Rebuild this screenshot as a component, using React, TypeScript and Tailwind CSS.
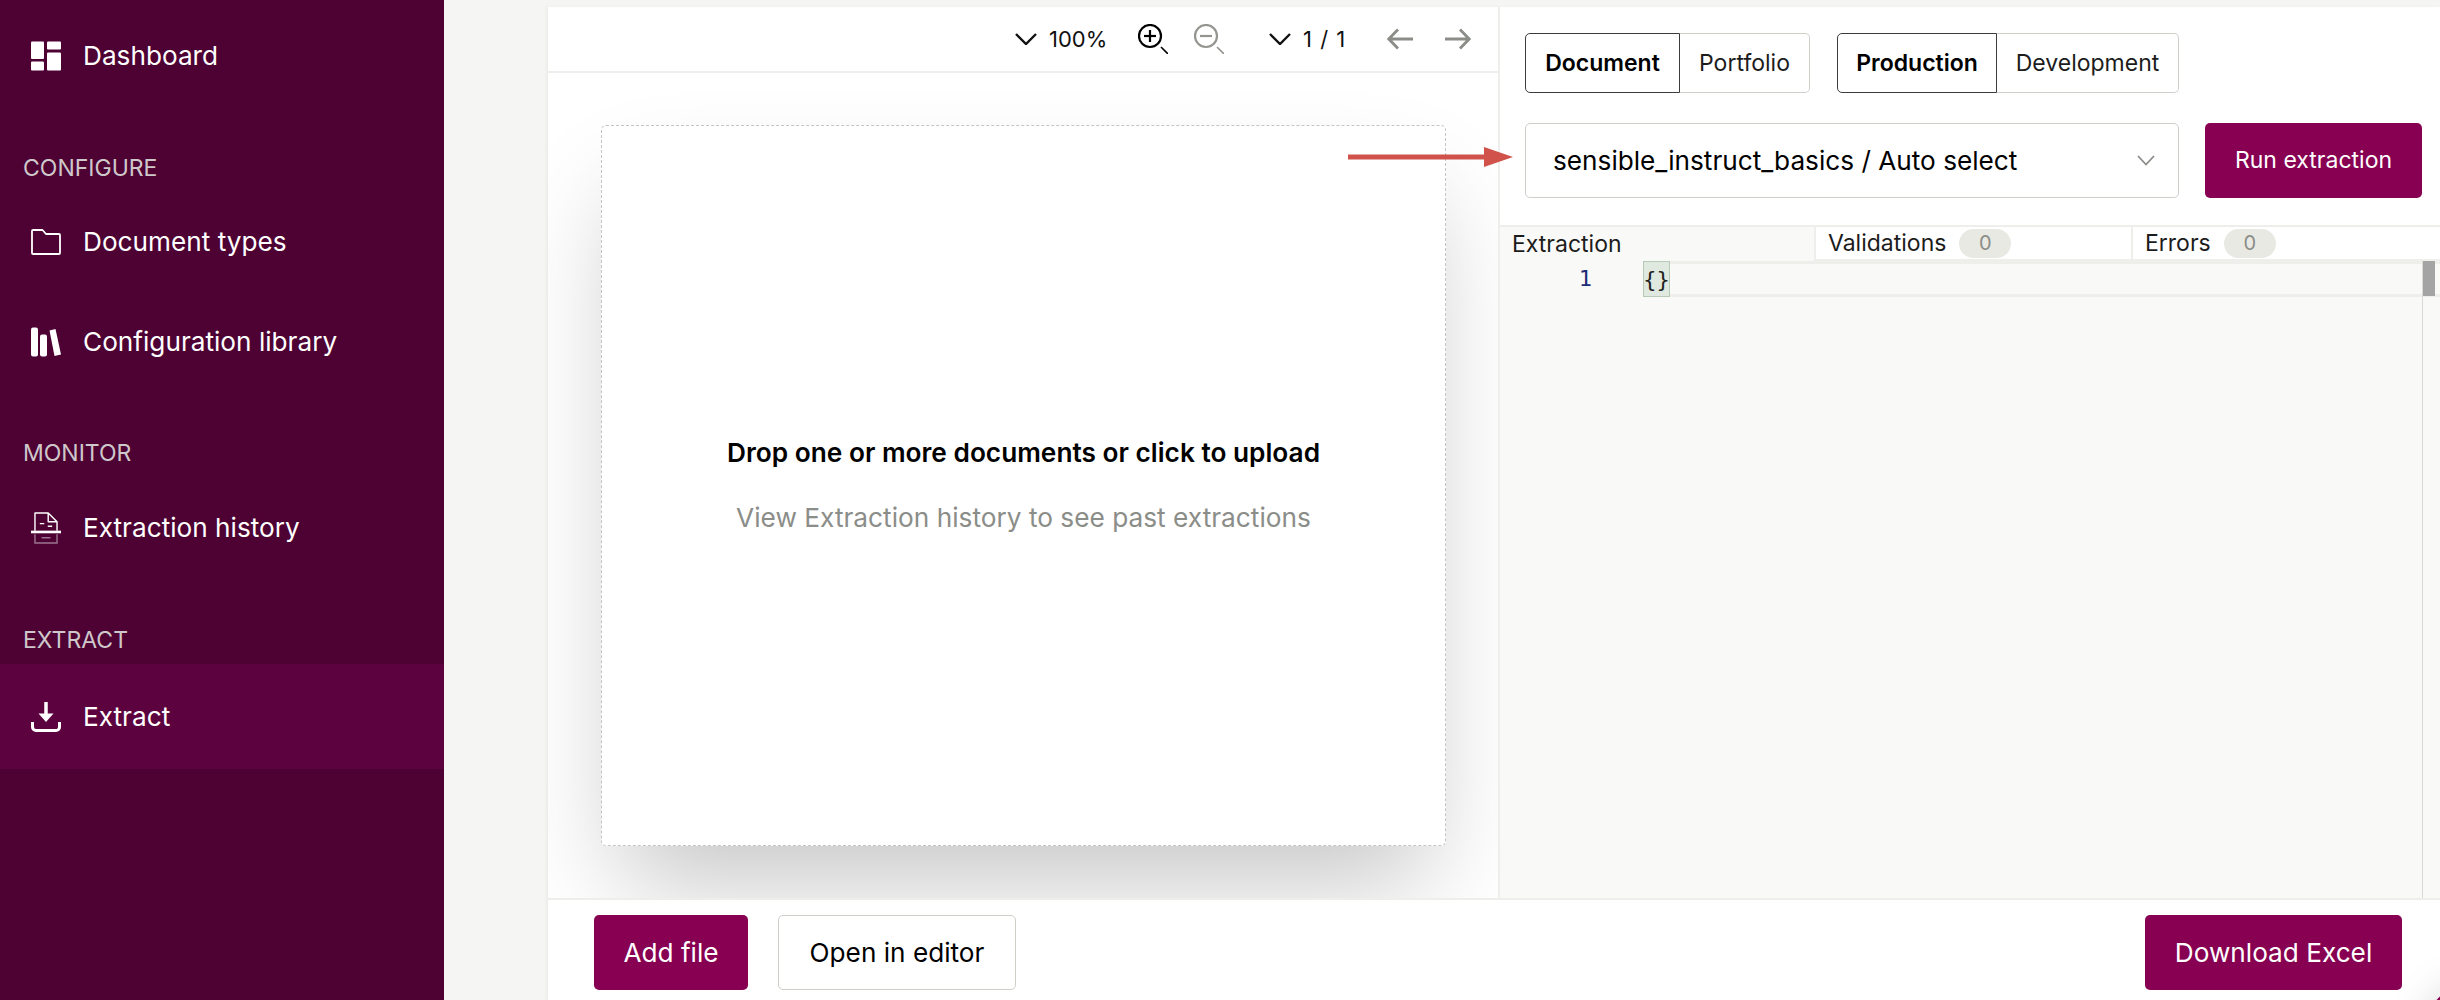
import React from "react";

const font = { fontFamily: "Inter, sans-serif" };

const DashboardIcon = () => (
  <svg width="30" height="30" viewBox="0 0 30 30" fill="currentColor">
    <rect x="0" y="0.5" width="13" height="17.5" rx="1" />
    <rect x="0" y="20.5" width="13" height="9" rx="1" />
    <rect x="16" y="0.5" width="14" height="8" rx="1" />
    <rect x="16" y="11.5" width="14" height="18" rx="1" />
  </svg>
);

const FolderIcon = () => (
  <svg width="30" height="30" viewBox="0 0 30 30" fill="none" stroke="currentColor" strokeWidth="1.8">
    <path d="M1 4a1 1 0 0 1 1-1h9.5l3.5 4h13a1 1 0 0 1 1 1v18a1 1 0 0 1-1 1H2a1 1 0 0 1-1-1z" strokeLinejoin="round" />
  </svg>
);

const LibraryIcon = () => (
  <svg width="30" height="30" viewBox="0 0 30 30" fill="currentColor">
    <rect x="0" y="0.5" width="7" height="29" rx="2" />
    <rect x="9" y="7.5" width="7" height="22" rx="2" />
    <path d="M18.5 3.5l6-1.5 5.5 25.5-6.5 1.5z" />
  </svg>
);

const HistoryIcon = () => (
  <svg width="34" height="36" viewBox="0 0 34 36" fill="none" stroke="currentColor" strokeWidth="1.6">
    <path d="M4.5 21V1h15l10 10v10M19.5 1v10h10" strokeLinejoin="round" />
    <path d="M10 13h5M19 16h5" />
    <path d="M0 22.5h34" strokeWidth="3" />
    <path d="M4.5 25v10h25V25M12 29h10" opacity="0.45" />
  </svg>
);

const ExtractIcon = () => (
  <svg width="30" height="30" viewBox="0 0 30 30" fill="none" stroke="currentColor">
    <path d="M15 0v14" strokeWidth="3.5" />
    <path d="M7.5 11.5h15L15 20z" fill="currentColor" stroke="none" />
    <path d="M1.5 20v5a3.5 3.5 0 0 0 3.5 3.5h20a3.5 3.5 0 0 0 3.5-3.5v-5" strokeWidth="3" />
  </svg>
);

const Chevron = ({ className = "" }: { className?: string }) => (
  <svg width="22" height="12" viewBox="0 0 22 12" fill="none" stroke="currentColor" strokeWidth="2.4" className={className}>
    <path d="M1 1l10 10L21 1" />
  </svg>
);

const Magnifier = ({ plus, className = "" }: { plus?: boolean; className?: string }) => (
  <svg width="30" height="30" viewBox="0 0 30 30" fill="none" stroke="currentColor" className={className}>
    <circle cx="12" cy="12" r="11" strokeWidth="2.2" />
    <path d="M6 12h12" strokeWidth="2.2" />
    {plus && <path d="M12 6v12" strokeWidth="2.2" />}
    <path d="M23 23l7 7" strokeWidth="1.6" />
  </svg>
);

const Arrow = ({ flip }: { flip?: boolean }) => (
  <svg width="27" height="22" viewBox="0 0 27 22" fill="none" stroke="currentColor" strokeWidth="2.8" className={flip ? "rotate-180 text-[#8b8d88]" : "text-[#8b8d88]"}>
    <path d="M26 11H2M11 1.5L1.8 11l9.2 9.5" />
  </svg>
);

const NavItem = ({ icon, label, active }: { icon: React.ReactNode; label: string; active?: boolean }) => (
  <div className={`flex items-center pl-[31px] text-[26.2px] text-white ${active ? "h-[105px] bg-[#5c023e]" : "h-[100px]"}`}>
    <div className="flex w-[30px] shrink-0 items-center justify-center">{icon}</div>
    <span className="ml-[22px]">{label}</span>
  </div>
);

const SectionLabel = ({ label, className }: { label: string; className: string }) => (
  <div className={`h-6 pl-[23px] text-[23px] leading-6 text-[#cfc8cb] ${className}`}>{label}</div>
);

const Segment = ({ first, second, firstWidth, secondWidth }: { first: string; second: string; firstWidth: string; secondWidth: string }) => (
  <div className="flex h-[60px] text-[23px]">
    <div className={`flex items-center justify-center rounded-l-[5px] border border-[#3c3c3a] font-semibold text-black ${firstWidth}`}>{first}</div>
    <div className={`flex items-center justify-center rounded-r-[5px] border border-l-0 border-[#cfcfca] text-[#1c1c1c] ${secondWidth}`}>{second}</div>
  </div>
);

const Badge = () => (
  <span className="ml-[13px] flex h-[29px] w-[52px] items-center justify-center rounded-full bg-[#e9e9e4] text-[20px] text-[#8b8d88]">0</span>
);

export default function App() {
  return (
    <div className="relative flex h-[1000px] w-[2440px] overflow-hidden bg-[#f5f5f3]" style={font}>
      {/* sidebar */}
      <aside className="flex w-[444px] shrink-0 flex-col bg-[#4d0233] pt-[6px]">
        <NavItem icon={<DashboardIcon />} label="Dashboard" />
        <SectionLabel label="CONFIGURE" className="mt-[50px] mb-[12px]" />
        <NavItem icon={<FolderIcon />} label="Document types" />
        <NavItem icon={<LibraryIcon />} label="Configuration library" />
        <SectionLabel label="MONITOR" className="mt-[49px] mb-[13px]" />
        <NavItem icon={<HistoryIcon />} label="Extraction history" />
        <SectionLabel label="EXTRACT" className="mt-[50px] mb-[12px]" />
        <NavItem icon={<ExtractIcon />} label="Extract" active />
      </aside>

      {/* main panel */}
      <main className="ml-[104px] mt-[7px] flex min-w-0 flex-1 flex-col bg-white shadow-[-2px_0_3px_rgba(0,0,0,0.04)]">
        <div className="flex h-[893px] shrink-0 border-b-2 border-[#eeeeea]">
          {/* document viewer */}
          <section className="flex w-[952px] shrink-0 flex-col border-r-2 border-[#eeeeea]">
            <div className="flex h-[66px] shrink-0 items-center border-b-2 border-[#eeeeea] pl-[467px] text-[22px] text-[#111]">
              <Chevron />
              <span className="ml-[12px] w-[58px]">100%</span>
              <Magnifier plus className="ml-[31px] text-black" />
              <Magnifier className="ml-[26px] text-[#93958f]" />
              <Chevron className="ml-[45px]" />
              <span className="ml-[12px] w-[41px] whitespace-nowrap [word-spacing:2px]">1 / 1</span>
              <div className="ml-[43px]"><Arrow /></div>
              <div className="ml-[30px]"><Arrow flip /></div>
            </div>
            <div className="flex-1 overflow-hidden px-[53px] pt-[52px]">
              <div className="flex h-[721px] w-[845px] flex-col items-center justify-center rounded-[5px] border border-dashed border-[#c4c4c0] bg-white shadow-[0_55px_100px_-20px_rgba(0,0,0,0.23)]">
                <div className="text-[26.25px] font-semibold leading-[32px] text-black">Drop one or more documents or click to upload</div>
                <div className="mt-[33px] text-[26.25px] leading-[32px] text-[#8b8d88]">View Extraction history to see past extractions</div>
              </div>
            </div>
          </section>

          {/* extraction panel */}
          <section className="flex min-w-0 flex-1 flex-col">
            <div className="flex gap-[27px] pl-[25px] pt-[26px]">
              <Segment first="Document" second="Portfolio" firstWidth="w-[155px]" secondWidth="w-[130px]" />
              <Segment first="Production" second="Development" firstWidth="w-[160px]" secondWidth="w-[182px]" />
            </div>
            <div className="flex gap-[26px] pl-[25px] pt-[30px]">
              <div className="flex h-[75px] w-[654px] items-center justify-between rounded-[5px] border border-[#cfcfca] pl-[27px] pr-[23px] text-[26.2px] text-black">
                sensible_instruct_basics / Auto select
                <svg width="18" height="11" viewBox="0 0 18 11" fill="none" stroke="#8b8d88" strokeWidth="1.8"><path d="M1 1l8 8.5L17 1" /></svg>
              </div>
              <button className="h-[75px] w-[217px] rounded-[5px] bg-[#870051] text-[23px] text-white">Run extraction</button>
            </div>
            <div className="mt-[27px] flex h-[36px] shrink-0 border-t-2 border-[#eeeeea] text-[23px] text-[#1c1c1c]">
              <div className="flex w-[314px] items-center bg-[#f9f9f7] pl-[12px]">Extraction</div>
              <div className="flex w-[317px] items-center border-b-2 border-l-2 border-[#eeeeea] pl-[12px]">Validations<Badge /></div>
              <div className="flex flex-1 items-center border-b-2 border-l-2 border-[#eeeeea] pl-[12px]">Errors<Badge /></div>
            </div>
            <div className="relative flex-1 bg-[#f9f9f7] font-['DejaVu_Sans_Mono',monospace] text-[22px]">
              <div className="flex h-[36px]">
                <span className="w-[92px] text-right leading-[36px] text-[#1c2a78]">1</span>
                <span className="ml-[51px] flex h-[36px] w-[27px] items-center justify-center border border-[#b7c9b7] bg-[#dfe9df] text-[#222]">{"{}"}</span>
                <div className="flex-1 border-y-[3px] border-[#eeeeea]" />
              </div>
              <div className="absolute right-[5px] top-0 h-[35px] w-[12px] bg-[#a4a4a4]" />
              <div className="absolute right-[17px] top-0 h-full w-px bg-[#d8d8d4]" />
            </div>
          </section>
        </div>

        {/* footer */}
        <footer className="flex flex-1 items-start justify-between pl-[46px] pr-[38px] pt-[15px] text-[26.2px]">
          <div className="flex gap-[30px]">
            <button className="h-[75px] w-[154px] rounded-[5px] bg-[#870051] text-white">Add file</button>
            <button className="h-[75px] w-[238px] rounded-[5px] border border-[#cfcfca] text-black">Open in editor</button>
          </div>
          <button className="h-[75px] w-[257px] rounded-[5px] bg-[#870051] text-white">Download Excel</button>
        </footer>
      </main>

      {/* annotation arrow drawn over the page */}
      <svg className="absolute left-[1348px] top-[147px]" width="165" height="20" viewBox="0 0 165 20">
        <path d="M0 7.5h136V0l29 10L136 20v-7.5H0z" fill="#d0524a" />
      </svg>

      {/* chat launcher, almost entirely off the page */}
      <div className="absolute left-[2425px] top-[985px] size-[90px] rounded-full bg-[#870051] shadow-[0_0_40px_rgba(0,0,0,0.15)]" />
    </div>
  );
}
